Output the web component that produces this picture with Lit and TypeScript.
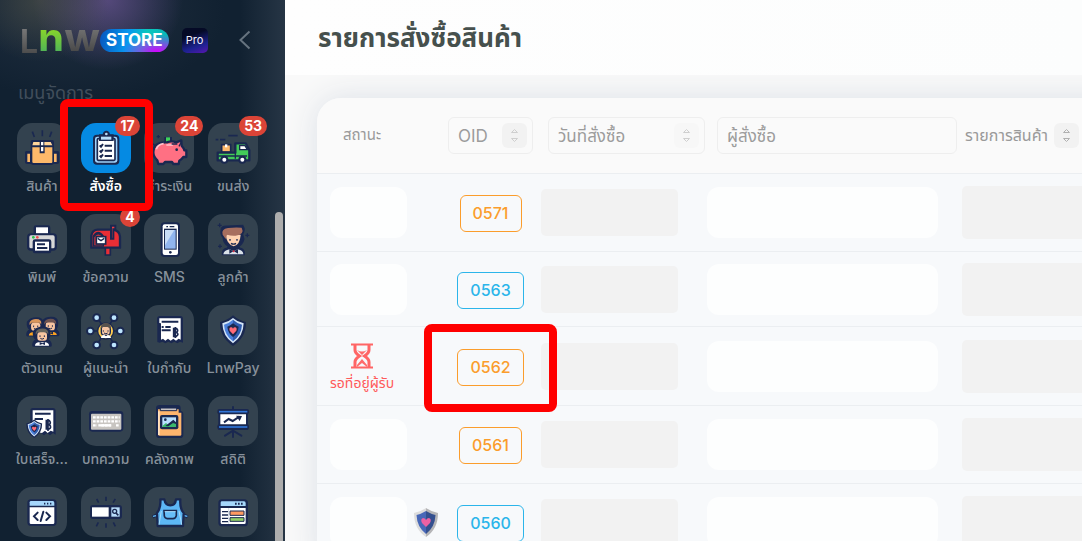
import { LitElement, html, css, svg, nothing } from "lit";
import { customElement } from "lit/decorators.js";
import { classMap } from "lit/directives/class-map.js";

const N = "#1a2850";

const shield = (x: number, y: number, s: number) => svg`
  <g transform="translate(${x} ${y}) scale(${s})" stroke-linejoin="round">
    <path d="M42 2Q24 18 3 22Q2 68 42 94Q82 68 81 22Q60 18 42 2Z" fill=${N}/>
    <path d="M42 10Q29 22 10 26Q11 65 42 86Q73 65 74 26Q55 22 42 10Z" fill="#d3e4f8"/>
    <path d="M42 15Q30 26 15 30Q17 62 42 80Z" fill="#4b7fdb"/>
    <path d="M42 15Q54 26 69 30Q67 62 42 80Z" fill="#2f5cb0"/>
    <path d="M42 26Q34 33 25 36Q27 56 42 67Q57 56 59 36Q50 33 42 26Z" fill=${N}/>
    <path d="M42 59L32 48Q29 40 35 38Q40 37 42 42Q44 37 49 38Q55 40 52 48Z" fill="#ff6b78"/>
  </g>`;

const person = (x: number, y: number, s: number, hair: string, body: string) => svg`
  <g transform="translate(${x} ${y}) scale(${s})">
    <path d="M4 56Q4 46 12 42L14 38Q4 30 6 16Q14 4 32 4Q50 4 50 18Q50 32 44 38L46 42Q54 46 54 56Z" fill=${N} stroke=${N} stroke-width="9" stroke-linejoin="round"/>
    <path d="M8 57Q8 50 18 47L40 47Q50 50 50 57Z" fill=${body}/>
    <rect x="15" y="16" width="29" height="26" rx="9" fill="#f7c4a0"/>
    <path d="M10 24Q8 9 24 6Q50 3 48 23L42 17H16Z" fill=${hair}/>
    <path d="M23 26v5M36 26v5M24 35q5 5 11 0" stroke=${N} stroke-width="3" fill="none"/>
    <path d="M22 46l8 4 8-4v9l-8-3-8 3z" fill=${N}/>
  </g>`;

const icons: Record<string, unknown> = {
  box: svg`
    <path d="M46 26l6 16M76 22v18M104 26l-6 16" stroke=${N} stroke-width="5"/>
    <path d="M28 84h94q5 0 5 5v28q0 6-7 6H31q-7 0-7-6V89q0-5 4-5z" fill=${N}/>
    <path d="M31 92h8v25h-8zM111 92h8v25h-8z" fill="#fdb96a"/>
    <path d="M46 51h60q5 0 5 6v60q0 9-9 9H49q-8 0-8-9V57q0-6 5-6z" fill=${N}/>
    <path d="M49 57h19v10H46zM82 57h19l5 10H82z" fill="#ffd49a"/>
    <path d="M46 73h22v18h15V73h23v44q0 3-3 3H50q-4 0-4-3z" fill="#fdb96a"/>
    <path d="M72 57h7v10h-7zM72 72h7v13h-7z" fill="#fff"/>`,
  clipboard: svg`
    <rect x="36" y="35" width="79" height="90" rx="12" fill=${N}/>
    <rect x="42" y="41" width="67" height="78" rx="7" fill="#9fd2fa"/>
    <rect x="49" y="47" width="53" height="65" rx="3" fill="#fff" stroke=${N} stroke-width="5"/>
    <path d="M54 34h11q2-11 11-11t11 11h11v20H54z" fill=${N}/>
    <path d="M60 41h31v9H60z" fill="#b7dcf8"/><circle cx="76" cy="33" r="4" fill="#b7dcf8"/>
    <path d="M56 67l4 4 6-8M56 83l4 4 6-8M56 98l4 4 6-8M71 68h22M71 83h22M71 99h22" fill="none" stroke=${N} stroke-width="6"/>`,
  pig: svg`
    <path d="M43 36v10M38 41h10M104 25v7M99 29h10M27 62l7 7" stroke=${N} stroke-width="4"/>
    <path d="M61 42h23v26H61z" fill=${N}/><path d="M66 43h12v18H66z" fill="#3ed35a"/>
    <path d="M28 88Q29 56 69 58Q83 52 97 58L112 52L113 68Q120 76 121 82H127V102H118Q113 109 106 113L104 123H88L84 117H63L58 123H43L40 112Q28 101 28 88Z" fill="#ff7083" stroke=${N} stroke-width="7" stroke-linejoin="round"/>
    <path d="M37 79Q41 64 59 62M67 66h20" stroke="#ffc3cc" stroke-width="5" fill="none"/>
    <path d="M112 57l-7 13M83 63h17" stroke=${N} stroke-width="4"/><circle cx="98" cy="80" r="4" fill=${N}/>`,
  truck: svg`
    <path d="M23 50h8M36 50h16M61 38h28" stroke=${N} stroke-width="5"/>
    <path d="M41 65h27v22H41z" fill="#fdb96a" stroke=${N} stroke-width="5"/><path d="M51 64h7v9h-7z" fill="#fff"/>
    <path d="M29 89H82V61H113L124 82V112H29Z" fill="#42cb59" stroke=${N} stroke-width="7" stroke-linejoin="round"/>
    <path d="M95 68h16l7 12H95z" fill="#fff" stroke=${N} stroke-width="4"/>
    <path d="M82 64v43M31 99h86" stroke=${N} stroke-width="4"/>
    <circle cx="49" cy="110" r="12" fill=${N}/><circle cx="49" cy="110" r="6" fill="#fff"/>
    <circle cx="103" cy="110" r="12" fill=${N}/><circle cx="103" cy="110" r="6" fill="#fff"/>`,
  printer: svg`
    <rect x="50" y="34" width="50" height="34" rx="7" fill=${N}/><path d="M57 40h36v19H57z" fill="#fff"/>
    <rect x="30" y="58" width="90" height="52" rx="12" fill=${N}/><rect x="37" y="64" width="76" height="39" rx="5" fill="#d7d7d7"/>
    <circle cx="49" cy="70" r="4" fill="#27c24b"/><circle cx="61" cy="70" r="4" fill="#f34d50"/>
    <rect x="47" y="76" width="56" height="42" rx="7" fill=${N}/><path d="M54 83h42v27H54z" fill="#fff"/>
    <path d="M60 91h24M60 102h31" stroke=${N} stroke-width="6"/>`,
  mailbox: svg`
    <path d="M73 99h15v24H73z" fill="#e92e35" stroke=${N} stroke-width="5"/>
    <path d="M31 101V65Q34 47 51 47H96Q116 50 117 68V101Z" fill="#e92e35" stroke=${N} stroke-width="7" stroke-linejoin="round"/>
    <path d="M35 98V66Q51 41 69 66V98Z" fill=${N}/><path d="M40 94V70Q51 53 65 70V94Z" fill="#d4333b"/>
    <rect x="46" y="68" width="28" height="22" fill="#fff" stroke=${N} stroke-width="5"/>
    <path d="M50 73l10 7 10-7" stroke=${N} stroke-width="4" fill="none"/>
    <path d="M90 74V35H103V46H97V74Z" fill="#f33b40" stroke=${N} stroke-width="6"/>`,
  phone: svg`
    <rect x="50" y="25" width="58" height="104" rx="11" fill=${N}/><rect x="56" y="31" width="46" height="92" rx="6" fill="#fff"/>
    <path d="M60 44h38v63H60z" fill=${N}/><path d="M63 48h32v56H63z" fill="#91b5ef"/><path d="M63 48h28L63 94z" fill="#c8dcf7"/>
    <path d="M67 38h5M77 38h14" stroke=${N} stroke-width="4"/><circle cx="79" cy="115" r="4" fill=${N}/>`,
  customer: svg`
    <path d="M35 28v12M29 34h12M118 58v12M112 64h12M36 91v12M30 97h12" stroke=${N} stroke-width="4"/>
    <path d="M44 121Q42 106 58 103L61 96Q47 88 46 70Q37 61 40 49Q39 36 57 37L104 35Q112 47 103 61L107 75Q104 89 92 96L95 103Q110 106 108 121Z" fill=${N} stroke=${N} stroke-width="5"/>
    <path d="M46 121Q47 109 65 106L77 112L89 106Q106 109 106 121Z" fill="#d9e1e8"/>
    <path d="M53 61Q56 92 77 97Q96 92 98 62Z" fill="#ffd2b1"/>
    <path d="M44 62Q39 45 60 42Q82 39 101 41Q111 61 83 65Q69 66 57 62L53 75Z" fill="#a76e5e"/>
    <path d="M66 75v5M87 75v5M69 88q8 5 15 0" stroke=${N} stroke-width="4" fill="none"/>
    <path d="M64 105l12 7-12 7zM90 105l-12 7 12 7z" fill=${N}/><circle cx="77" cy="112" r="3" fill="#e33447"/>`,
  agents: svg`
    ${person(28, 37, 0.95, "#d9955b", "#fca321")}
    ${person(72, 36, 0.95, "#6e5350", "#fca321")}
    ${person(46, 65, 1, "#66635c", "#ffffff")}`,
  network: svg`
    <path d="M49 38l51 81M99 38l-51 81M27 78h90" stroke=${N} stroke-width="5"/>
    ${[[47, 38], [99, 38], [28, 78], [118, 78], [47, 120], [99, 120]].map(
      ([x, y]) => svg`<circle cx=${x} cy=${y} r="13" fill=${N}/><circle cx=${x} cy=${y} r="7" fill="#bde5ff"/>`)}
    <circle cx="74" cy="78" r="26" fill=${N}/><circle cx="74" cy="78" r="22" fill="#ffcc4f"/>
    <rect x="61" y="61" width="27" height="30" rx="10" fill="#f6c6a4" stroke=${N} stroke-width="4"/>
    <path d="M59 71Q58 54 75 53Q91 54 89 72L80 66H66Z" fill="#58534e"/>
    <path d="M60 99Q61 89 70 90L75 94L80 90Q89 91 90 99Z" fill="#fff"/><path d="M67 76v4M81 76v4M69 84q6 5 11 0" stroke=${N} stroke-width="3" fill="none"/>`,
  invoice: svg`
    <path d="M39 42q0-9 9-9h61q8 0 8 9v71l-9-3-8 5-9-5-9 5-9-5-9 5-9-5-8 3-7-2V58q-1-3-1-8z" fill=${N}/>
    <path d="M46 40h64v64l-6-3-8 6-8-6-8 6-8-6-8 6-7-6-6 3V55l-5-1z" fill="#fff"/>
    <path d="M53 50h50M53 66h6M64 66h16M53 76h27" stroke=${N} stroke-width="6"/>
    <path d="M89 71h9q6 6 0 11 8 7-1 12h-8zM94 66v33M89 82h9" stroke=${N} stroke-width="5" fill="none"/>`,
  shield: shield(33, 29, 1),
  receipt: svg`
    <path d="M40 44q0-8 8-8h59q9 0 9 9v71l-8-5-9 7-9-7-9 7-9-7-32-2z" fill=${N}/>
    <path d="M47 43h62v64l-8-3-9 7-8-7-9 7-28-5z" fill="#fff"/>
    <path d="M54 53h47M53 69h25" stroke=${N} stroke-width="6"/>
    <path d="M88 74h9q6 7 0 12 8 8-1 13h-8zM93 69v36M88 86h9" stroke=${N} stroke-width="5" fill="none"/>
    ${shield(26, 69, 0.61)}`,
  keyboard: svg`
    <rect x="24" y="45" width="103" height="62" rx="10" fill=${N}/><rect x="30" y="53" width="91" height="48" rx="3" fill="#c8c5c1"/>
    <path d="M36 64h80M36 76h80M36 88h12M61 88h33M105 88h11" stroke="#fff" stroke-width="7" stroke-dasharray="8 3"/>
    <path d="M52 88h38" stroke="#fff" stroke-width="7"/>`,
  album: svg`
    <path d="M36 36q0-9 11-9h55q8 0 8 9v9q8 1 8 10v61q0 10-10 10H47q-11 0-11-10z" fill=${N}/>
    <path d="M42 40h62v10h8v66q0 3-4 3H46q-4 0-4-4z" fill="#fdb56d"/><path d="M49 36h49v8H49z" fill="#c9c4c4" stroke=${N} stroke-width="3"/>
    <path d="M42 46h5v71h-5z" fill="#ffe2c2"/>
    <rect x="48" y="57" width="55" height="43" rx="6" fill=${N}/><path d="M55 64h41v29H55z" fill="#b8e0ff"/>
    <path d="M55 90l11-9 8 7 14-14 8 7v12H55z" fill="#39b66d"/><path d="M64 90l24-19 8 8v5l-9-3-14 10z" fill=${N}/><circle cx="64" cy="71" r="4" fill=${N}/>`,
  chart: svg`
    <path d="M75 33v90M75 104l-24 15M75 104l25 15" stroke=${N} stroke-width="6" stroke-linecap="round"/>
    <path d="M34 50h83v48H34z" fill="#fff" stroke=${N} stroke-width="6"/>
    <rect x="28" y="39" width="95" height="16" rx="6" fill=${N}/><path d="M33 47h85" stroke="#3176d9" stroke-width="5"/>
    <rect x="28" y="85" width="95" height="16" rx="6" fill=${N}/><path d="M33 93h85" stroke="#3176d9" stroke-width="5"/>
    <path d="M48 79l14-10 12 6 20-13" stroke=${N} stroke-width="6" fill="none"/><path d="M84 59l18 1-7 15z" fill=${N}/>`,
  code: svg`
    <rect x="31" y="37" width="88" height="80" rx="11" fill=${N}/><path d="M38 46q0-4 4-4h65q5 0 5 5v9H38z" fill="#a6d7fb"/>
    <path d="M38 61h74v46q0 4-4 4H42q-4 0-4-4z" fill="#fff"/>
    <path d="M81 50h4M90 50h4M99 50h4" stroke=${N} stroke-width="5"/>
    <path d="M62 77L51 88l11 11M88 77l11 11-11 11M79 74l-8 28" stroke=${N} stroke-width="6" fill="none" stroke-linecap="round"/>`,
  search: svg`
    <path d="M47 36l6 11M75 29v13M103 36l-7 11M52 106l-6 12M75 109v13M97 106l6 12" stroke=${N} stroke-width="5"/>
    <rect x="27" y="54" width="96" height="42" rx="9" fill=${N}/><path d="M33 61h50v28H33z" fill="#fff"/>
    <path d="M91 61h25v28H91z" fill="#b8dcfa"/><circle cx="101" cy="73" r="6" fill="none" stroke=${N} stroke-width="4"/><path d="M105 78l7 7" stroke=${N} stroke-width="5"/>`,
  apron: svg`
    <path d="M26 90l10-5 11-2M131 90l-9-5-11-2" stroke=${N} stroke-width="10" fill="none"/><path d="M27 88l17-4M130 88l-17-4" stroke="#5db7f5" stroke-width="4"/>
    <path d="M49 37H61Q64 55 79 55T96 37H109Q107 66 119 78L117 117H41L39 78Q51 63 49 37Z" fill="#5db7f5" stroke=${N} stroke-width="7" stroke-linejoin="round"/>
    <path d="M60 71H97V86Q95 95 87 95H70Q62 94 61 87Z" fill="#67bdf7" stroke=${N} stroke-width="5"/>
    <path d="M62 74h33M52 72L45 113M105 72l8 41" stroke="#a9dcfa" stroke-width="3"/>`,
  layout: svg`
    <rect x="31" y="37" width="89" height="81" rx="11" fill=${N}/><path d="M38 47q0-4 4-4h66q5 0 5 5v9H38z" fill="#a6d7fb"/>
    <path d="M38 63h75v44q0 4-4 4H42q-4 0-4-4z" fill="#fff"/><path d="M81 50h5M90 50h5M99 50h5" stroke=${N} stroke-width="6"/>
    <path d="M42 74h19M42 84h19M42 94h19M42 104h19" stroke=${N} stroke-width="4"/>
    <path d="M66 72h42v13H66z" fill="#ff9b61" stroke=${N} stroke-width="3"/><path d="M66 92h42v11H66z" fill="#91cf68" stroke=${N} stroke-width="3"/>
    <path d="M62 63v48" stroke="#d8e0e8" stroke-width="3"/>`,
};

interface MenuItem { icon: string; label: string; badge?: number; active?: boolean; }

const MENU: MenuItem[] = [
  { icon: "box", label: "สินค้า" },
  { icon: "clipboard", label: "สั่งซื้อ", badge: 17, active: true },
  { icon: "pig", label: "ชำระเงิน", badge: 24 },
  { icon: "truck", label: "ขนส่ง", badge: 53 },
  { icon: "printer", label: "พิมพ์" },
  { icon: "mailbox", label: "ข้อความ", badge: 4 },
  { icon: "phone", label: "SMS" },
  { icon: "customer", label: "ลูกค้า" },
  { icon: "agents", label: "ตัวแทน" },
  { icon: "network", label: "ผู้แนะนำ" },
  { icon: "invoice", label: "ใบกำกับ" },
  { icon: "shield", label: "LnwPay" },
  { icon: "receipt", label: "ใบเสร็จ..." },
  { icon: "keyboard", label: "บทความ" },
  { icon: "album", label: "คลังภาพ" },
  { icon: "chart", label: "สถิติ" },
  { icon: "code", label: "" },
  { icon: "search", label: "" },
  { icon: "apron", label: "" },
  { icon: "layout", label: "" },
];

@customElement("side-menu")
export class SideMenu extends LitElement {
  static styles = css`
    :host {
      display: block;
      position: relative;
      overflow: hidden;
      box-sizing: border-box;
      width: 285px;
      flex: none;
      color: #87919b;
      background:
        radial-gradient(ellipse 70px 62px at 40px 0, #5556498c, transparent),
        radial-gradient(ellipse 75px 70px at 108px 0, #6d5596b0, transparent),
        radial-gradient(ellipse 150px 90px at 75px 10px, #2c394b99, transparent),
        linear-gradient(90deg, transparent 240px, #263545 285px),
        #112131;
    }
    .brand { display: flex; align-items: center; height: 26px; padding: 27px 34px 22px 20px; }
    .word {
      display: flex; align-items: baseline; width: 80px;
      font: 700 42px/26px Inter, sans-serif;
    }
    .grey, .green { color: transparent; background-clip: text; -webkit-background-clip: text; }
    .grey { background-image: linear-gradient(#777, #4a4a4a); }
    .green { background-image: linear-gradient(#93dc22, #52b455); }
    .small { font-size: 32px; }
    .store {
      border-radius: 12px; padding: 0 6px; font: 700 17px/23px Inter, sans-serif; color: #fff;
      background:
        radial-gradient(ellipse 34px 18px at 82% 100%, #d400ff, #c800ff00),
        linear-gradient(100deg, #0756bd, #0797ef 40%, #0bc7bd 65%, #08b4b8);
    }
    .pro {
      margin-left: 13px; width: 26px; border-radius: 5px; text-align: center;
      font: 400 11px/25px Inter, sans-serif; color: #f3f3ff;
      background: linear-gradient(160deg, #050a26 30%, #1c2290 70%, #5916b0);
    }
    .collapse { margin-left: auto; padding: 0; border: 0; background: none; display: flex; }
    .collapse svg { width: 12px; height: 20px; }
    .section {
      margin: 0; padding: 0 18px; font-size: 18px; line-height: 36px; font-weight: 400; color: #414e5b;
      margin-bottom: 12px;
    }
    .grid { display: grid; grid-template-columns: repeat(4, 1fr); margin: 0 20px 0 10px; }
    .item {
      position: relative; display: flex; flex-direction: column; align-items: center; height: 91px;
      text-decoration: none; color: inherit; font-size: 14px; font-weight: 500; line-height: 26px; white-space: nowrap;
    }
    .tile { position: relative; width: 50px; height: 50px; border-radius: 15px; background: #33424f; flex: none; }
    .tile svg { display: block; width: 50px; height: 50px; }
    .active { z-index: 2; color: #fff; font-weight: 600; }
    .active .tile { background: #058ae3; }
    .badge {
      position: absolute; top: -7px; right: -9px; height: 20px; padding: 0 5px; border-radius: 10px;
      background: #db4437; color: #fff; font-size: 14px; font-weight: 700; line-height: 19px;
    }
    .frame { position: absolute; inset: -24px -15px 3px -14px; border: 8px solid #f00; border-radius: 8px; }
    .thumb {
      position: absolute; top: 212px; bottom: -8px; right: 2px; width: 8px; border-radius: 4px; background: #adadad;
    }
  `;

  render() {
    return html`
      <div class="brand">
        <span class="word"><span class="grey small">L</span><span class="green">n</span><span class="grey">w</span></span>
        <span class="store">STORE</span>
        <span class="pro">Pro</span>
        <button class="collapse" aria-label="ย่อเมนู">
          <svg viewBox="0 0 12 20"><path d="M10.500 1.500L1.500 10l9 8.500" fill="none" stroke="#66737f" stroke-width="2"/></svg>
        </button>
      </div>
      <h2 class="section">เมนูจัดการ</h2>
      <nav class="grid">
        ${MENU.map((m) => html`
          <a class=${classMap({ item: true, active: !!m.active })} href="#${m.icon}">
            <span class="tile">
              <svg viewBox="0 0 150 150" aria-hidden="true">${icons[m.icon]}</svg>
              ${m.badge ? html`<span class="badge">${m.badge}</span>` : nothing}
            </span>
            <span>${m.label}</span>
            ${m.active ? html`<span class="frame"></span>` : nothing}
          </a>`)}
      </nav>
      <div class="thumb"></div>
    `;
  }
}

interface Order { id: string; tone: "orange" | "blue"; size: string; waiting?: boolean; marked?: boolean; pay?: boolean; }

const ORDERS: Order[] = [
  { id: "0571", tone: "orange", size: "mid" },
  { id: "0563", tone: "blue", size: "low" },
  { id: "0562", tone: "orange", size: "high", waiting: true, marked: true },
  { id: "0561", tone: "orange", size: "mid" },
  { id: "0560", tone: "blue", size: "mid", pay: true },
];

@customElement("order-list")
export class OrderList extends LitElement {
  static styles = css`
    :host { display: block; flex: 1; min-width: 0; overflow: hidden; background: #f9f9f9; color: #999; }
    .top { position: relative; background: linear-gradient(90deg, #fefefe, #fcfdfd); padding: 0 33px; }
    h1 { margin: 0; font-size: 26px; line-height: 75px; font-weight: 700; color: #46504d; }
    .card {
      margin: 23px -40px 0 32px; border-radius: 24px 0 0 0; background: #f7f9fb; overflow: hidden;
      box-shadow: 0 0 32px #dbe0e7;
    }
    table { width: 100%; table-layout: fixed; border-collapse: separate; border-spacing: 0; }
    .c-status { width: 123px; }
    .c-id { width: 101px; }
    .c-date { width: 166px; }
    .c-buyer { width: 255px; }
    th { height: 75px; padding: 0; background: #fafafa; font-weight: 400; font-size: 15px; text-align: left; }
    td { padding: 0; }
    th, td { border-bottom: 1px solid #ebeef1; vertical-align: middle; }
    .mid td { height: 77px; }
    .low td { height: 74px; }
    .high td { height: 78px; }
    .status-head { padding-left: 26px; }
    .box {
      display: flex; align-items: center; box-sizing: border-box; height: 37px; margin: 0 8px;
      padding: 0 5px 0 9px; border: 1px solid #eee; border-radius: 6px;
    }
    .date-box { margin: 0 2px 0 7px; }
    .buyer-box { margin: 0 5px 0 10px; }
    input {
      flex: 1; min-width: 0; width: 0; height: 33px; padding: 0; border: 0; background: none; outline: 0;
      font: inherit; font-size: 17px; color: #999;
    }
    input::placeholder { color: #9c9c9c; opacity: 1; }
    .items { display: flex; align-items: center; gap: 6px; padding-left: 3px; white-space: nowrap; font-size: 16px; }
    .sort {
      display: grid; place-items: center; width: 25px; height: 25px; flex: none; padding: 0; border: 0;
      border-radius: 6px; background: #f2f2f2; color: #cfcfcf;
    }
    .faint { background: #f7f7f7; }
    .strong { color: #b0b0b0; }
    .sort svg { width: 9px; height: 15px; }
    .status { display: flex; align-items: center; gap: 7px; padding-left: 13px; }
    .white { width: 77px; height: 51px; border-radius: 12px; background: #fdfefe; }
    .wide { width: 231px; }
    .mute { width: 137px; height: 47px; border-radius: 5px; background: #f2f2f2; }
    .tall { width: auto; height: 53px; border-radius: 5px 0 0 5px; }
    .wait {
      display: flex; flex-direction: column; align-items: center; gap: 2px; padding-top: 5px;
      color: #ff5a5a; font-size: 14px; line-height: 24px; white-space: nowrap;
    }
    .wait svg { width: 24px; height: 26px; }
    .pay { width: 24px; height: 29px; }
    .id { display: flex; justify-content: center; padding-top: 2px; }
    .hold { position: relative; }
    .pill {
      display: block; box-sizing: border-box; height: 37px; padding: 0 12px; border: 1px solid; border-radius: 6px;
      font-size: 16px; line-height: 34px; font-weight: 500; text-decoration: none;
    }
    .orange { color: #fb9d2c; }
    .blue { color: #2bb5ea; }
    .frame { position: absolute; z-index: 2; inset: -25px -33px -26px; border: 8px solid #f00; border-radius: 8px; pointer-events: none; }
  `;

  private sort(tone: string) {
    return html`<button class="sort ${tone}" aria-label="เรียงลำดับ">
      <svg viewBox="0 0 9 15"><path d="M1.500 4.500l3-3 3 3zM1.500 10.500l3 3 3-3z" fill="none" stroke="currentColor"/></svg>
    </button>`;
  }

  private status(o: Order) {
    if (o.waiting) {
      return html`<span class="wait">
        <svg viewBox="0 0 24 26" aria-hidden="true">
          <path d="M1 1.500h22M1 24.500h22" stroke="#ff6565" stroke-width="2"/>
          <path d="M5 2v5q0 3 4.500 6Q5 16 5 19v5M19 2v5q0 3-4.500 6 4.500 3 4.500 6v5" fill="none" stroke="#ff6565" stroke-width="3"/>
          <path d="M7 7q5 3 10 0l-5 5zM7 24v-2l5-6 5 6v2l-5-4z" fill="#ff6b6b"/>
        </svg>
        รอที่อยู่ผู้รับ
      </span>`;
    }
    return html`<span class="white"></span>
      ${o.pay ? html`<svg class="pay" viewBox="0 0 24 29" aria-label="LnwPay">
        <path d="M12 0Q6 4 0 5Q0 21 12 29Z" fill="#ddd"/><path d="M12 0Q18 4 24 5Q24 21 12 29Z" fill="#b5b5b7"/>
        <path d="M12 3Q7 6 2.500 7Q3 19 12 26Z" fill="#4868b8"/><path d="M12 3Q17 6 21.500 7Q21 19 12 26Z" fill="#34508f"/>
        <path d="M12 19l-4-4q-2-4 1-5 2 0 3 2 1-2 3-2 3 1 1 5z" fill="#ed61a3"/>
      </svg>` : nothing}`;
  }

  render() {
    return html`
      <header class="top"><h1>รายการสั่งซื้อสินค้า</h1></header>
      <div class="card">
        <table>
          <colgroup><col class="c-status"><col class="c-id"><col class="c-date"><col class="c-buyer"><col></colgroup>
          <thead>
            <tr>
              <th><div class="status-head">สถานะ</div></th>
              <th><div class="box"><input aria-label="OID" placeholder="OID">${this.sort("")}</div></th>
              <th><div class="box date-box"><input aria-label="วันที่สั่งซื้อ" placeholder="วันที่สั่งซื้อ">${this.sort("faint")}</div></th>
              <th><div class="box buyer-box"><input aria-label="ผู้สั่งซื้อ" placeholder="ผู้สั่งซื้อ"></div></th>
              <th><div class="items"><span>รายการสินค้า</span>${this.sort("strong")}</div></th>
            </tr>
          </thead>
          <tbody>
            ${ORDERS.map((o) => html`
              <tr class=${o.size}>
                <td><div class="status">${this.status(o)}</div></td>
                <td><div class="id"><span class="hold">
                  <a class="pill ${o.tone}" href="#${o.id}">${o.id}</a>
                  ${o.marked ? html`<span class="frame"></span>` : nothing}
                </span></div></td>
                <td><div class="mute"></div></td>
                <td><div class="white wide"></div></td>
                <td><div class="mute tall"></div></td>
              </tr>`)}
          </tbody>
        </table>
      </div>
    `;
  }
}

@customElement("app-root")
export class AppRoot extends LitElement {
  static styles = css`
    :host {
      display: flex; height: 100vh; overflow: hidden;
      font-family: Inter, "Noto Sans Thai", "Noto Sans", sans-serif;
    }
  `;
  render() {
    return html`<side-menu></side-menu><order-list></order-list>`;
  }
}
